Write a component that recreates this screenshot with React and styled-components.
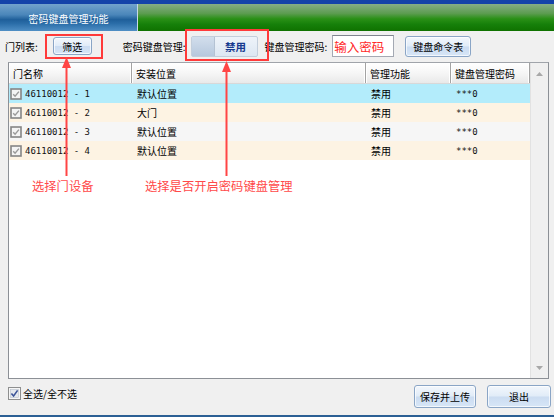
import React from 'react';
import styled, { createGlobalStyle } from 'styled-components';

const GlobalStyle = createGlobalStyle`
    html, body {
        margin: 0;
        padding: 0;
        background: #f0f0f0;
    }
    body {
        font-family: "Noto Sans CJK SC", "Noto Sans", sans-serif;
        font-size: 10px;
        color: #000;
    }
`;

const rows = [
    { id: 1, name: '46110012 - 1', place: '默认位置', func: '禁用', pwd: '***0', tone: 'selected' },
    { id: 2, name: '46110012 - 2', place: '大门', func: '禁用', pwd: '***0', tone: 'cream' },
    { id: 3, name: '46110012 - 3', place: '默认位置', func: '禁用', pwd: '***0', tone: 'gray' },
    { id: 4, name: '46110012 - 4', place: '默认位置', func: '禁用', pwd: '***0', tone: 'cream' },
];

const rowColors = {
    selected: '#b3ecfb',
    cream: '#fdf3e3',
    gray: '#f6f6f6',
};

const columns = '123px 234px 85px 1fr';

function RowCheck() {
    return (
        <svg width="12" height="12" viewBox="0 0 12 12">
            <rect x="1" y="1" width="10" height="10" fill="#f4f4f4" stroke="#858585" strokeWidth="1.6" />
            <path d="M3.2 6.2 L5.1 8.2 L8.9 3.6" fill="none" stroke="#9a9a9a" strokeWidth="1.4" />
        </svg>
    );
}

function AllCheck() {
    return (
        <svg width="13" height="13" viewBox="0 0 13 13">
            <rect x="0.5" y="0.5" width="12" height="12" fill="#f6f6f6" stroke="#8e8f8f" />
            <rect x="2.5" y="2.5" width="8" height="8" fill="#e4e8ee" stroke="#b8c0cc" strokeWidth="0.6" />
            <path d="M3.4 6.4 L5.6 9 L9.6 3.4" fill="none" stroke="#3b5498" strokeWidth="1.6" />
        </svg>
    );
}

function App() {
    return (
        <>
            <GlobalStyle />
            <Window>
                <TitleBar>
                    <TitleTab>密码键盘管理功能</TitleTab>
                    <TitleFill />
                </TitleBar>

                <Toolbar>
                    <Label>门列表:</Label>
                    <Button $w={39} $h={18} $ml={15}>筛选</Button>
                    <Label $ml={31}>密码键盘管理:</Label>
                    <Toggle>
                        <ToggleKnob />
                        <ToggleText>禁用</ToggleText>
                    </Toggle>
                    <Label $ml={7}>键盘管理密码:</Label>
                    <PwdInput readOnly value="输入密码" />
                    <Button $w={66} $h={21} $ml={11}>键盘命令表</Button>
                </Toolbar>

                <GridBox>
                    <Table>
                        <HeaderRow>
                            <HeaderCell>门名称</HeaderCell>
                            <HeaderCell>安装位置</HeaderCell>
                            <HeaderCell>管理功能</HeaderCell>
                            <HeaderCell>键盘管理密码</HeaderCell>
                        </HeaderRow>
                        {rows.map((row) => (
                            <Row key={row.id} $tone={row.tone}>
                                <NameCell>
                                    <RowCheck />
                                    <Mono>{row.name}</Mono>
                                </NameCell>
                                <Cell>{row.place}</Cell>
                                <Cell>{row.func}</Cell>
                                <Cell><Mono>{row.pwd}</Mono></Cell>
                            </Row>
                        ))}
                    </Table>
                    <ScrollTrack>
                        <svg width="7" height="4" viewBox="0 0 7 4"><path d="M0 4 L3.5 0 L7 4 Z" fill="#a8a8a8" /></svg>
                        <svg width="7" height="4" viewBox="0 0 7 4"><path d="M0 0 L3.5 4 L7 0 Z" fill="#a8a8a8" /></svg>
                    </ScrollTrack>
                </GridBox>

                <Footer>
                    <CheckLabel>
                        <AllCheck />
                        <span>全选/全不选</span>
                    </CheckLabel>
                    <FooterButtons>
                        <Button $w={62} $h={23}>保存并上传</Button>
                        <Button $w={64} $h={23} $ml={11}>退出</Button>
                    </FooterButtons>
                </Footer>

                <Overlay>
                    <RedBox $x={45} $y={34} $w={58} $h={25} />
                    <RedBox $x={185} $y={29} $w={84} $h={32} />
                    <svg width="554" height="417" viewBox="0 0 554 417">
                        <line x1="66.5" y1="64" x2="66.5" y2="176" stroke="#ff4545" strokeWidth="2" />
                        <polygon points="66.5,57 62,68 71,68" fill="#ff4545" />
                        <line x1="226.5" y1="68" x2="226.5" y2="176" stroke="#ff4545" strokeWidth="2" />
                        <polygon points="226.5,61 222,72 231,72" fill="#ff4545" />
                    </svg>
                    <Note $x={32} $y={177}>选择门设备</Note>
                    <Note $x={145} $y={177}>选择是否开启密码键盘管理</Note>
                </Overlay>
            </Window>
        </>
    );
}

const Window = styled.div`
    position: relative;
    width: 554px;
    height: 417px;
    background: #f0f0f0;
    display: flex;
    flex-direction: column;
    overflow: hidden;
    border-bottom: 2px solid #2b5f94;
    box-sizing: border-box;
`;

const TitleBar = styled.div`
    height: 31px;
    display: flex;
    border-top: 4px solid #1443a9;
    box-sizing: border-box;
`;

const TitleTab = styled.div`
    width: 137px;
    display: flex;
    align-items: center;
    justify-content: center;
    color: #fff;
    font-size: 10px;
    padding-top: 1px;
    background: linear-gradient(#73a3cc 0%, #4a86ba 40%, #1f5f9a 58%, #2a6da8 72%, #4f8fc5 100%);
    border-right: 1px solid #c6d8e4;
`;

const TitleFill = styled.div`
    flex: 1;
    background: linear-gradient(#86ad86 0%, #5c9c50 35%, #2a9016 55%, #16800a 75%, #0f7200 100%);
`;

const Toolbar = styled.div`
    height: 31px;
    display: flex;
    align-items: center;
    padding-left: 5px;
    padding-bottom: 1px;
    box-sizing: border-box;
`;

const Label = styled.span`
    margin-left: ${(p) => p.$ml || 0}px;
    white-space: nowrap;
    font-size: 10px;
`;

const Button = styled.div`
    width: ${(p) => p.$w}px;
    height: ${(p) => p.$h}px;
    margin-left: ${(p) => p.$ml || 0}px;
    box-sizing: border-box;
    display: flex;
    align-items: center;
    justify-content: center;
    border: 1px solid #8aa5c6;
    border-radius: 3px;
    background: linear-gradient(#f3f7fc 0%, #e1ecf8 48%, #cbdcf1 52%, #d7e6f7 100%);
    box-shadow: inset 0 0 0 1px rgba(255, 255, 255, 0.7);
    font-size: 10px;
    white-space: nowrap;
`;

const Toggle = styled.div`
    width: 67px;
    height: 21px;
    margin-left: 5px;
    box-sizing: border-box;
    display: flex;
    border: 1px solid #c3cedb;
    border-radius: 2px;
    background: linear-gradient(#eef3f9, #dde7f2);
`;

const ToggleKnob = styled.div`
    width: 22px;
    border-right: 1px solid #b4c2d3;
    background: linear-gradient(#d2deec, #b7c8dd);
`;

const ToggleText = styled.div`
    flex: 1;
    display: flex;
    align-items: center;
    justify-content: center;
    color: #173a8f;
    font-weight: 700;
    font-size: 10.5px;
`;

const PwdInput = styled.input`
    width: 62px;
    height: 22px;
    margin-left: 5px;
    box-sizing: border-box;
    border: 1px solid #a4a9b3;
    border-top-color: #7f858f;
    background: #fff;
    color: #ff2a2a;
    font-family: "Noto Sans CJK SC", sans-serif;
    font-size: 12.5px;
    padding: 0 1px;
    outline: none;
`;

const GridBox = styled.div`
    height: 317px;
    margin: 0 5px 0 8px;
    display: flex;
    border: 1px solid #8c9096;
    border-top-color: #a0a4aa;
    background: #fff;
    box-sizing: border-box;
`;

const Table = styled.div`
    flex: 1;
    display: flex;
    flex-direction: column;
`;

const HeaderRow = styled.div`
    height: 21px;
    display: grid;
    grid-template-columns: ${columns};
    background: linear-gradient(#ffffff 0%, #f6f6f6 50%, #e9e9e9 100%);
    border-bottom: 1px solid #d8d8d8;
    box-sizing: border-box;
`;

const HeaderCell = styled.div`
    display: flex;
    align-items: center;
    padding-left: 4px;
    border-right: 1px solid #a3a3a3;
    box-shadow: inset -1px 0 0 #fff, inset 1px 0 0 #fff;
    font-size: 10px;
    white-space: nowrap;
`;

const Row = styled.div`
    height: 19px;
    display: grid;
    grid-template-columns: ${columns};
    background: ${(p) => rowColors[p.$tone]};
`;

const Cell = styled.div`
    display: flex;
    align-items: center;
    padding-left: 5px;
    font-size: 10px;
    white-space: nowrap;
`;

const NameCell = styled(Cell)`
    padding-left: 1px;
    gap: 3px;
`;

const Mono = styled.span`
    font-family: "DejaVu Sans Mono", "Liberation Mono", monospace;
    font-size: 9px;
    color: #111;
`;

const ScrollTrack = styled.div`
    width: 18px;
    display: flex;
    flex-direction: column;
    align-items: center;
    justify-content: space-between;
    padding: 9px 0 8px;
    box-sizing: border-box;
    background: #f0f0f0;
    border-left: 1px solid #e2e2e2;
`;

const Footer = styled.div`
    flex: 1;
    display: flex;
    align-items: center;
    justify-content: space-between;
    padding: 0 3px 1px 8px;
`;

const CheckLabel = styled.div`
    display: flex;
    align-items: center;
    gap: 2px;
    font-size: 10px;
    margin-top: -6px;
`;

const FooterButtons = styled.div`
    display: flex;
    align-items: center;
`;

const Overlay = styled.div`
    position: absolute;
    inset: 0;
    pointer-events: none;

    svg {
        position: absolute;
        left: 0;
        top: 0;
    }
`;

const RedBox = styled.div`
    position: absolute;
    left: ${(p) => p.$x}px;
    top: ${(p) => p.$y}px;
    width: ${(p) => p.$w}px;
    height: ${(p) => p.$h}px;
    border: 2px solid #ff3a3a;
    box-sizing: border-box;
`;

const Note = styled.div`
    position: absolute;
    left: ${(p) => p.$x}px;
    top: ${(p) => p.$y}px;
    color: #ff4a4a;
    font-size: 12.3px;
    white-space: nowrap;
`;

export default App;
